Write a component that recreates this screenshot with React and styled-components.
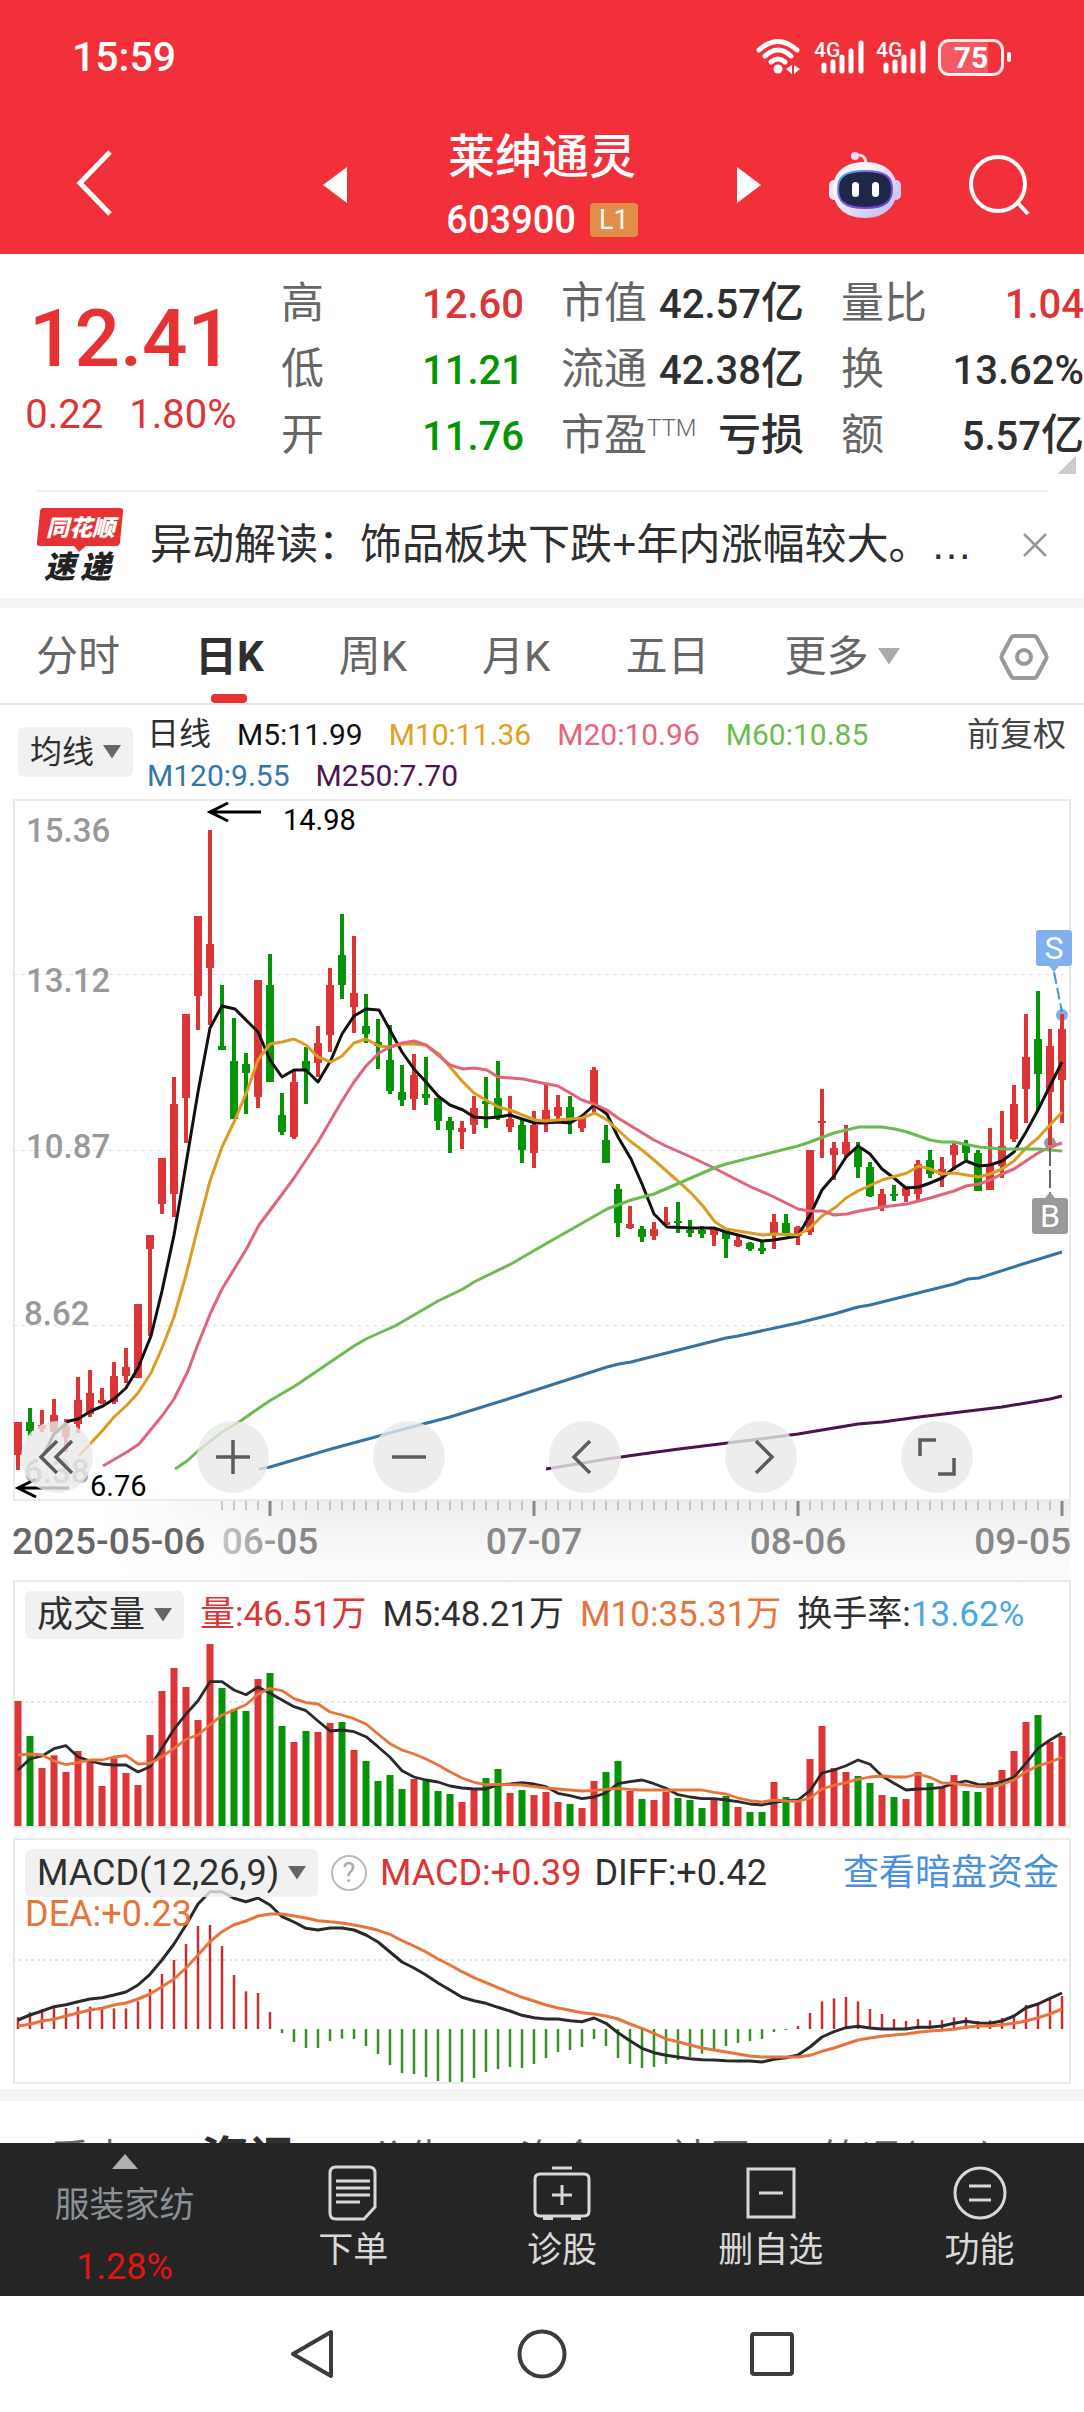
import React, { useState } from "react";
import styled, { createGlobalStyle } from "styled-components";

const UI = `Roboto, "Noto Sans CJK SC", sans-serif`;

const C = {
  brand: "#f13039",
  up: "#dd3535",
  down: "#059405",
  ink: "#2f2f2f",
  grey: "#666",
  line: "#ebebeb",
  strip: "#f4f4f4",
  orange: "#e8743b",
};

const GlobalStyle = createGlobalStyle`
  *, *::before, *::after { box-sizing: border-box; }
  body { margin: 0; background: #fff; color: ${C.ink}; font-family: ${UI}; }
  button, select { font: inherit; color: inherit; background: none; border: 0; padding: 0; margin: 0; }
  button { cursor: pointer; display: inline-flex; align-items: center; justify-content: center; }
  svg { display: block; flex: none; overflow: visible; }
  h1, p, ul, dl, dd { margin: 0; padding: 0; font-weight: 400; }
`;

/* ---------- market data, in chart units ---------- */

const FIRST_X = 18;
const STEP = 12;
const barX = (i) => FIRST_X + STEP * i;

// direction, high, body top, body bottom, low
const CANDLES = [
  "R 1422 1422 1455 1470", "G 1408 1422 1431 1436", "R 1410 1425 1429 1432", "R 1399 1415 1432 1432",
  "R 1419 1426 1437 1452", "R 1377 1400 1424 1433", "R 1370 1393 1414 1417", "R 1388 1400 1403 1404",
  "R 1362 1376 1402 1404", "R 1348 1367 1376 1383", "R 1304 1304 1378 1378", "R 1235 1235 1249 1336",
  "R 1158 1158 1204 1214", "R 1077 1104 1194 1217", "R 1014 1014 1098 1143", "R 916 916 996 1030",
  "R 830 944 968 1025", "G 985 1046 1050 1050", "G 1018 1061 1119 1119", "G 1053 1064 1073 1114",
  "R 980 980 1097 1108", "G 954 985 1082 1082", "G 1093 1115 1132 1135", "R 1071 1082 1137 1139",
  "G 1047 1061 1071 1104", "R 1026 1043 1063 1077", "R 968 985 1035 1052", "G 914 955 985 999",
  "R 936 993 1007 1033", "G 994 1026 1034 1043", "G 1019 1042 1046 1069", "G 1025 1060 1091 1094",
  "G 1065 1092 1100 1106", "R 1054 1075 1099 1110", "G 1057 1094 1098 1105", "G 1098 1098 1121 1130",
  "G 1117 1121 1130 1153", "R 1121 1128 1132 1149", "R 1096 1108 1125 1134", "G 1077 1101 1104 1128",
  "G 1061 1098 1117 1120", "R 1096 1119 1127 1132", "G 1119 1125 1150 1163", "R 1111 1125 1153 1168",
  "R 1085 1110 1121 1132", "R 1095 1107 1116 1121", "G 1096 1107 1122 1134", "R 1117 1117 1128 1132",
  "R 1067 1070 1104 1113", "G 1125 1140 1163 1163", "G 1184 1189 1223 1237", "R 1206 1224 1228 1229",
  "G 1226 1229 1237 1242", "R 1222 1229 1236 1240", "R 1207 1222 1225 1225", "G 1202 1221 1223 1233",
  "G 1220 1230 1233 1237", "G 1226 1230 1234 1238", "R 1229 1229 1235 1246", "G 1230 1230 1239 1258",
  "R 1236 1240 1246 1247", "G 1242 1243 1249 1251", "G 1240 1248 1251 1254", "R 1214 1222 1235 1249",
  "G 1214 1223 1233 1233", "R 1226 1227 1236 1245", "R 1150 1150 1232 1235", "R 1089 1121 1123 1158",
  "R 1142 1148 1155 1180", "R 1125 1142 1154 1158", "G 1142 1148 1167 1178", "G 1162 1167 1196 1197",
  "R 1189 1194 1206 1211", "G 1185 1194 1196 1201", "R 1186 1188 1196 1202", "R 1160 1164 1194 1200",
  "G 1150 1160 1174 1178", "R 1157 1169 1175 1187", "R 1143 1145 1155 1170", "G 1140 1145 1153 1161",
  "G 1150 1153 1191 1191", "R 1128 1165 1190 1190", "R 1111 1146 1166 1178", "R 1085 1104 1139 1142",
  "R 1014 1057 1089 1123", "G 991 1039 1074 1110", "R 1029 1046 1092 1145", "R 1014 1029 1080 1123",
].map((row) => {
  const [dir, high, top, bottom, low] = row.split(" ");
  return { up: dir === "R", high: +high, top: +top, bottom: +bottom, low: +low };
});

const AVERAGES = [
  { color: "#111", pts: "45,1452 54,1434 69,1421 78,1419 91,1411 103,1406 114,1399 126,1388 138,1368 151,1336 162,1291 174,1235 180,1200 187,1158 198,1092 210,1028 222,1006 235,1009 258,1032 270,1060 282,1077 294,1070 306,1070 318,1082 331,1060 342,1034 354,1016 366,1009 379,1010 390,1030 402,1052 414,1069 426,1082 438,1096 450,1105 463,1110 474,1117 487,1118 498,1117 510,1115 522,1119 535,1123 545,1123 558,1122 570,1123 582,1116 594,1105 607,1114 618,1137 631,1159 642,1184 654,1214 667,1227 691,1228 714,1228 726,1232 738,1235 762,1241 774,1240 798,1236 810,1215 822,1190 834,1176 846,1157 858,1146 870,1154 882,1169 894,1178 906,1188 919,1187 930,1183 942,1178 954,1168 966,1161 979,1166 990,1165 1002,1161 1014,1152 1026,1132 1038,1110 1050,1086 1062,1062" },
  { color: "#dc9c22", pts: "79,1456 91,1443 103,1430 114,1417 127,1405 138,1393 151,1373 162,1348 174,1317 186,1275 198,1227 210,1181 222,1147 235,1120 247,1091 258,1060 270,1044 282,1042 294,1039 306,1045 318,1057 331,1062 342,1056 354,1043 366,1039 379,1046 390,1047 402,1044 414,1044 426,1045 439,1054 450,1067 462,1081 474,1093 498,1107 510,1110 535,1120 545,1121 570,1119 582,1118 595,1113 607,1120 630,1141 642,1150 654,1160 679,1182 691,1193 703,1206 715,1222 726,1229 750,1233 763,1235 774,1234 798,1235 810,1228 822,1216 836,1207 846,1198 858,1191 882,1180 907,1173 919,1166 930,1169 942,1174 954,1173 979,1177 990,1174 1002,1169 1014,1161 1026,1148 1038,1138 1050,1125 1062,1112" },
  { color: "#e2637a", pts: "103,1466 127,1452 139,1444 162,1416 174,1399 188,1371 198,1344 211,1312 222,1289 247,1248 259,1225 271,1209 283,1193 294,1178 318,1142 342,1101 354,1082 366,1066 379,1053 390,1047 402,1043 414,1041 426,1045 438,1055 450,1065 463,1069 474,1068 487,1070 498,1077 523,1079 542,1083 558,1086 582,1100 594,1104 607,1110 618,1118 654,1140 666,1146 691,1157 714,1168 749,1186 774,1197 798,1209 810,1211 823,1211 834,1215 847,1214 859,1211 882,1207 907,1204 930,1198 954,1191 966,1186 979,1184 990,1180 1002,1174 1014,1169 1026,1161 1038,1153 1050,1147 1062,1143" },
  { color: "#6dba50", pts: "175,1469 187,1461 198,1451 222,1432 239,1422 259,1408 271,1400 295,1386 354,1346 366,1339 379,1333 395,1326 438,1301 463,1289 474,1282 511,1264 542,1246 607,1209 631,1200 654,1194 714,1168 726,1164 798,1146 810,1142 823,1137 834,1133 859,1127 882,1127 895,1129 907,1132 930,1140 942,1142 954,1142 979,1147 1002,1149 1038,1149 1062,1151" },
  { color: "#3474a4", pts: "259,1469 270,1467 304,1457 331,1449 379,1436 408,1428 450,1417 511,1398 542,1388 607,1367 619,1364 631,1362 726,1338 738,1336 798,1323 834,1314 858,1307 870,1305 954,1284 968,1279 979,1278 1026,1263 1062,1252" },
  { color: "#4a154b", pts: "546,1469 583,1463 607,1459 642,1454 679,1449 760,1439 798,1434 858,1424 882,1422 919,1417 1002,1407 1050,1399 1062,1396" },
];

const nums = (s) => s.trim().split(/\s+/).map(Number);

const VOLUME = nums(`393 498 594 556 606 543 567 648 565 609 645 495 363 294 351 450 222 354 418 423 327 309
 468 516 483 486 459 456 540 573 633 615 657 627 627 663 672 696 654 624 597 669 660 675 666 696 702 714 633 606
 573 663 687 690 665 684 690 714 690 678 711 726 726 636 681 690 567 468 594 606 618 639 675 681 687 606 639 654
 615 663 666 636 600 543 456 435 516 498`);
const VOLUME_M5 = nums(`600 567 558 536 527 560 573 582 585 585 606 590 535 478 432 392 335 335 360 374 351 370
 390 410 422 453 483 480 485 500 530 562 602 621 630 636 648 654 657 657 645 642 638 642 650 670 677 686 681 668
 641 635 630 641 655 674 681 686 686 690 695 702 705 698 692 690 662 609 600 587 570 583 618 640 660 657 656 652
 640 633 643 644 635 622 580 535 510 489`);
const VOLUME_M10 = nums(`555 552 555 573 584 578 570 570 561 557 582 580 560 535 508 495 465 435 420 404 373 355
 362 386 398 402 426 435 446 462 492 521 540 552 567 585 605 624 637 644 643 644 645 650 654 657 660 663 661 658
 655 658 660 660 660 660 660 660 667 672 684 692 696 690 693 694 684 657 646 638 628 621 618 621 621 612 622 639
 640 645 650 650 643 630 605 587 577 562`);
const MACD = nums(`562 547 538 530 534 530 530 532 535 535 514 477 432 390 342 288 285 348 435 484 489 546
 609 636 654 654 633 626 627 648 672 705 729 732 741 753 756 756 744 726 717 711 714 702 684 666 660 651 627 648
 684 702 714 711 702 690 681 671 660 648 639 633 627 606 600 588 549 514 505 501 514 537 552 567 573 567 571 570
 562 562 573 571 564 557 525 520 505 498`);
const DIFF = nums(`570 555 543 530 524 515 507 503 495 486 465 433 390 342 285 222 185 185 205 215 204 225
 260 276 295 300 294 294 300 315 336 366 396 414 435 459 480 502 512 520 532 543 556 563 567 567 572 575 564 580
 608 632 655 668 676 681 686 689 690 692 693 693 696 688 683 675 651 621 605 593 589 594 597 597 597 592 592 588
 580 574 579 580 573 558 533 522 505 489`);
const DEA = nums(`588 583 573 568 558 549 540 535 525 519 507 492 470 447 414 375 335 305 284 273 258 252
 252 258 264 272 275 279 285 292 301 313 332 348 366 387 405 425 443 458 473 488 502 513 525 534 541 548 552 558
 567 582 595 610 627 635 645 654 660 666 672 678 681 681 681 681 676 664 654 642 630 624 619 615 612 607 603 601
 598 592 588 588 584 580 573 563 552 537`);

const series = (values) => values.map((v, i) => `${barX(i)},${(v / 3).toFixed(1)}`).join(" ");

/* ---------- header ---------- */

const Page = styled.div`
  width: 100%;
  overflow: hidden;
`;

const Header = styled.header`
  background: ${C.brand};
  color: #fff;
`;

const StatusBar = styled.div`
  display: flex;
  align-items: center;
  justify-content: space-between;
  padding: 32px 80px 0 72px;
  height: 82px;
  font-size: 41px;
  font-weight: 500;
  line-height: 50px;
`;

const StatusIcons = styled.div`
  display: flex;
  align-items: center;
  gap: 12px;
`;

const TitleBar = styled.div`
  display: grid;
  grid-template-columns: 1fr 438px 1fr;
  align-items: center;
  height: 172px;
  padding: 38px 54px 8px;
`;

const BackSlot = styled.div`
  padding-left: 22px;
`;

const StockSwitch = styled.div`
  display: flex;
  align-items: center;
  justify-content: space-between;
`;

const StockTitle = styled.div`
  display: flex;
  flex-direction: column;
  align-items: center;
  padding-top: 4px;
`;

const StockName = styled.h1`
  font-size: 47px;
  line-height: 66px;
  font-weight: 500;
`;

const StockCode = styled.div`
  display: flex;
  align-items: center;
  gap: 14px;
  font: 500 38px/60px ${UI};
`;

const Level = styled.span`
  background: #e28d48;
  border-radius: 4px;
  padding: 0 9px;
  font-size: 27px;
  line-height: 34px;
  font-weight: 400;
`;

const HeaderTools = styled.div`
  display: flex;
  align-items: center;
  justify-content: flex-end;
  gap: 68px;
`;

const Wifi = () => (
  <svg width="46" height="36" viewBox="0 0 46 36" fill="none" stroke="#fff" strokeWidth="5" strokeLinecap="round">
    <path d="M3 11Q22-6 41 11" />
    <path d="M9 17Q22 5 35 17" />
    <path d="M15 23Q22 17 29 23" />
    <circle cx="22" cy="30" r="4.500" fill="#fff" stroke="none" />
    <path d="M36 26v9l-6-5zM38 35v-9l6 4z" fill="#fff" stroke="none" />
  </svg>
);

const Signal = () => (
  <svg width="50" height="36" viewBox="0 0 50 36">
    <text x="0" y="18" fontSize="21" fontWeight="500" fontFamily="Roboto" fill="#fff">4G</text>
    <g stroke="#fff" strokeWidth="5" strokeLinecap="round">
      <path d="M10 26v6M19 23v9M28 18v14M37 12v20M47 4v28" />
    </g>
  </svg>
);

const Battery = styled.span`
  display: flex;
  align-items: center;
  justify-content: center;
  position: relative;
  width: 66px;
  height: 37px;
  border: 3px solid rgba(255, 255, 255, 0.9);
  border-radius: 11px;
  font-size: 30px;
  line-height: 31px;
  font-weight: 700;
  background: linear-gradient(90deg, rgba(255, 255, 255, 0.2) 78%, transparent 78%);
  &::after {
    content: "";
    position: absolute;
    right: -10px;
    width: 4px;
    height: 10px;
    border-radius: 2px;
    background: #fff;
  }
`;

const Robot = () => (
  <svg width="72" height="68" viewBox="0 0 72 68">
    <defs>
      <linearGradient id="shell" x1="0" y1="0" x2="1" y2="1">
        <stop offset="0.3" stopColor="#fdf5fb" />
        <stop offset="1" stopColor="#b9b5ee" />
      </linearGradient>
      <linearGradient id="rim" x1="0" y1="0" x2="1" y2="1">
        <stop offset="0" stopColor="#48b7df" />
        <stop offset="0.5" stopColor="#8d4bd8" />
        <stop offset="1" stopColor="#5a43c8" />
      </linearGradient>
    </defs>
    <path d="M27 4q10-1 10 9" fill="none" stroke="#f3dff0" strokeWidth="3" />
    <circle cx="26" cy="5" r="4" fill="#ecd9f2" />
    <rect x="0" y="29" width="10" height="20" rx="5" fill="#ece6fa" />
    <rect x="62" y="29" width="10" height="20" rx="5" fill="#cfc9f3" />
    <path d="M36 11C56 11 68 22 68 38S57 67 36 67 4 55 4 38 16 11 36 11Z" fill="url(#shell)" />
    <path d="M36 20c22 0 27 7 27 18s-5 19-27 19S9 49 9 38s5-18 27-18Z" fill="#1e2748" stroke="url(#rim)" strokeWidth="2" />
    <rect x="23" y="31" width="7" height="15" rx="3.500" fill="#fff" />
    <rect x="43" y="31" width="7" height="15" rx="3.500" fill="#fff" />
  </svg>
);

/* ---------- quote ---------- */

const Quote = styled.section`
  position: relative;
  display: grid;
  grid-template-columns: 244px repeat(3, 1fr);
  column-gap: 37px;
  padding: 16px 0 22px;
`;

const LastPrice = styled.div`
  display: flex;
  flex-direction: column;
  align-items: center;
  padding: 16px 0 0 18px;
  color: ${C.up};
  white-space: nowrap;
`;

const Price = styled.strong`
  font: 500 80px/106px ${UI};
  color: #e63232;
`;

const Change = styled.span`
  display: flex;
  gap: 26px;
  font: 400 40px/46px ${UI};
`;

const Stats = styled.dl`
  display: flex;
  flex-direction: column;
`;

const Stat = styled.div`
  display: flex;
  align-items: baseline;
  justify-content: space-between;
  height: 66px;
  font: 400 43px/66px ${UI};
  white-space: nowrap;
  dt { color: ${C.grey}; }
  dd { color: ${(p) => p.$color || C.ink}; font-weight: 500; }
  sup { font: 300 24px/24px ${UI}; vertical-align: 14px; }
`;

const Figure = styled.span`
  font-size: 40px;
  line-height: 40px;
`;

const Corner = styled.span`
  position: absolute;
  right: 8px;
  bottom: 16px;
  width: 18px;
  height: 18px;
  background: linear-gradient(135deg, transparent 50%, #ccc 50%);
`;

const News = styled.section`
  display: flex;
  align-items: center;
  margin: 0 36px;
  height: 108px;
  border-top: 2px solid #eee;
`;

const NewsLink = styled.a`
  flex: 1;
  min-width: 0;
  margin: 0 20px 0 24px;
  font: 400 42px/60px "Liberation Sans", "Noto Sans CJK SC", sans-serif;
  color: ${C.ink};
  text-decoration: none;
  white-space: nowrap;
`;

const Strip = styled.div`
  height: ${(p) => p.$h}px;
  background: ${C.strip};
`;

const ExpressLogo = () => (
  <svg width="90" height="76" viewBox="0 0 90 76" role="img" aria-label="同花顺速递">
    <path d="M7 1H84q4 0 3 4L84 35q0 4-4 4H50l-7 6-5-6H4q-4 0-3-4L4 5q0-4 3-4Z" fill="#e63232" />
    <text x="10" y="29" fontSize="23" fontWeight="900" fontStyle="italic" fontFamily="Noto Sans CJK SC" fill="#fff">同花顺</text>
    <text x="8" y="71" fontSize="31" fontWeight="900" fontStyle="italic" fontFamily="Noto Sans CJK SC" fill="#222">速</text>
    <text x="44" y="71" fontSize="31" fontWeight="900" fontStyle="italic" fontFamily="Noto Sans CJK SC" fill="#222">递</text>
  </svg>
);

/* ---------- tabs ---------- */

const Tabs = styled.nav`
  display: flex;
  align-items: stretch;
  gap: 75px;
  height: 97px;
  padding: 2px 36px 0;
  border-bottom: 2px solid #e6e6e6;
`;

const Tab = styled.button`
  position: relative;
  font-size: 42px;
  line-height: 60px;
  font-weight: ${(p) => (p.$on ? 700 : 400)};
  color: ${(p) => (p.$on ? C.ink : C.grey)};
  gap: 10px;
  white-space: nowrap;
  &::after {
    content: "";
    display: ${(p) => (p.$on ? "block" : "none")};
    position: absolute;
    bottom: 0;
    left: 50%;
    margin-left: -18px;
    width: 36px;
    height: 9px;
    border-radius: 4px;
    background: #e63232;
  }
`;

const TabIcon = styled.button`
  margin-left: auto;
`;

const Caret = ({ size = 18, color = "#666" }) => (
  <svg width={size} height={size * 0.75} viewBox="0 0 18 14" preserveAspectRatio="none" aria-hidden="true">
    <path d="M0 0H18L9 14Z" fill={color} />
  </svg>
);

/* ---------- chart chrome ---------- */

const PickerBox = styled.label`
  display: inline-flex;
  align-items: center;
  flex: none;
  height: ${(p) => p.$h || 48}px;
  padding: 0 12px;
  gap: 8px;
  border-radius: 6px;
  background: rgba(238, 238, 238, 0.8);
  select {
    appearance: none;
    font-size: ${(p) => p.$size || 36}px;
    line-height: 48px;
  }
`;

const Picker = ({ name, options, ...box }) => (
  <PickerBox {...box}>
    <select aria-label={name} defaultValue={options[0]}>
      {options.map((o) => (
        <option key={o}>{o}</option>
      ))}
    </select>
    <Caret />
  </PickerBox>
);

const AverageBar = styled.div`
  display: flex;
  align-items: flex-start;
  padding: 9px 18px 3px;
  height: 94px;
`;

const AverageList = styled.div`
  flex: 1;
  display: flex;
  flex-wrap: wrap;
  column-gap: 26px;
  margin-left: 14px;
  font-size: 32px;
  line-height: 41px;
`;

const PickerSlot = styled.div`
  padding-top: 13px;
`;

const Adjust = styled.button`
  font-size: 33px;
  line-height: 41px;
  color: #444;
`;

const Value = styled.span`
  color: ${(p) => p.$color || C.ink};
  font-size: ${(p) => p.$size || 35}px;
  white-space: nowrap;
`;

const Panel = styled.section`
  display: grid;
  margin: 0 13px;
  border: 2px solid ${C.line};
  > * { grid-area: 1 / 1; }
  > svg { width: 100%; height: auto; }
`;

const Gap = styled.div`
  height: ${(p) => p.$h}px;
`;

const Controls = styled.div`
  align-self: end;
  display: flex;
  gap: 104px;
  padding: 0 0 6px 6px;
`;

const RoundButton = styled.button`
  width: 72px;
  height: 72px;
  border-radius: 50%;
  background: rgba(232, 232, 232, 0.8);
`;

const Legend = styled.div`
  align-self: start;
  display: flex;
  flex-wrap: wrap;
  align-items: center;
  column-gap: ${(p) => p.$gap}px;
  padding: 9px 10px 0;
  line-height: 48px;
  font-size: 35px;
`;

const LegendBreak = styled.div`
  flex-basis: 100%;
  line-height: 34px;
`;

const DarkPoolLink = styled.a`
  margin-left: auto;
  font-size: 36px;
  color: #4a90dc;
  text-decoration: none;
`;

const HelpButton = styled.button`
  width: 36px;
  height: 36px;
  border: 2px solid #bbb;
  border-radius: 50%;
  color: #aaa;
  font-size: 27px;
  line-height: 30px;
`;

const Axis = styled.div`
  margin: 0 13px;
  height: 79px;
  background:
    linear-gradient(90deg, #fff 8%, rgba(255, 255, 255, 0) 30%),
    linear-gradient(180deg, #ededed, #fafafa 70%, #fbfbfb);
  svg { width: 100%; height: auto; }
`;

const TabClip = styled.nav`
  display: flex;
  align-items: flex-start;
  gap: 71px;
  height: 42px;
  padding: 28px 0 0 50px;
  overflow: hidden;
  button { flex: none; font-size: 40px; line-height: 62px; color: ${C.grey}; white-space: nowrap; }
  button:nth-child(2) { font-size: 48px; font-weight: 700; color: ${C.ink}; }
`;

/* ---------- bottom ---------- */

const ActionBar = styled.nav`
  display: flex;
  height: 153px;
  background: #252525;
  color: #d8d8d8;
`;

const Sector = styled.button`
  flex: 0 0 249px;
  flex-direction: column;
  justify-content: flex-start;
  padding: 11px 0 0;
  font-size: 35px;
  line-height: 52px;
  color: #8a9094;
`;

const SectorName = styled.span`
  padding: 11px 0 10px;
`;

const SectorChange = styled.span`
  color: #e01414;
  font-size: 36px;
  line-height: 50px;
`;

const Action = styled.button`
  flex: 1;
  flex-direction: column;
  justify-content: flex-start;
  padding-top: 22px;
  gap: 6px;
  font-size: 35px;
  line-height: 48px;
`;

const SystemNav = styled.nav`
  display: flex;
  justify-content: center;
  align-items: center;
  gap: 182px;
  height: 116px;
`;

const ICONS = {
  order: (
    <>
      <path d="M8 2H41q6 0 6 6V42L36 54H8q-6 0-6-6V8q0-6 6-6Z" />
      <path d="M8 16H42M8 23H42M8 30H42M8 37H32" />
    </>
  ),
  clinic: (
    <>
      <path d="M19 3H39M7 9H51q5 0 5 5V46q0 5-5 5H7q-5 0-5-5V14q0-5 5-5ZM29 20V40M19 30H39" />
      <path d="M10 53H20M38 53H48" strokeWidth="4" />
    </>
  ),
  remove: <path d="M2 4H48V52H2ZM13 28H37" />,
  more: (
    <>
      <circle cx="26" cy="28" r="25" />
      <path d="M15 21H37M15 35H37" />
    </>
  ),
};

const ACTIONS = [
  ["order", 50, "下单"],
  ["clinic", 58, "诊股"],
  ["remove", 50, "删自选"],
  ["more", 52, "功能"],
];

const KLine = () => (
  <svg viewBox="15 801 1054 698" role="img" aria-label="日K线图" fontFamily={UI}>
    <g stroke="#dedede" strokeDasharray="4 4">
      <path d="M13 974.500H1071M13 1150.500H1071M13 1325.500H1071" />
    </g>
    <g fill="#999" fontSize="33" fontWeight="500">
      <text x="26" y="842">15.36</text>
      <text x="26" y="992">13.12</text>
      <text x="26" y="1158">10.87</text>
      <text x="24" y="1325">8.62</text>
      <text x="24" y="1483">6.38</text>
    </g>
    <circle cx="1062" cy="1015" r="6" fill="#86aee8" />
    <circle cx="1050" cy="1143" r="6" fill="#999" />
    {CANDLES.map((c, i) => (
      <g key={i} fill={c.up ? "#dd3535" : "#059405"}>
        <rect x={barX(i) - 2} y={c.high} width="4" height={Math.max(1, c.low - c.high)} />
        <rect x={barX(i) - 4} y={c.top} width="8" height={c.bottom - c.top} />
      </g>
    ))}
    {AVERAGES.map((a) => (
      <polyline key={a.color} points={a.pts} fill="none" stroke={a.color} strokeWidth="3" strokeLinejoin="round" />
    ))}
    <path d="M261 812H210M228 803L210 812L228 821M69 1488H18M36 1479L18 1488L36 1497" fill="none" stroke="#000" strokeWidth="3" />
    <g fontSize="29">
      <text x="283" y="830">14.98</text>
      <text x="90" y="1496">6.76</text>
    </g>
    <path d="M1054 972L1062 1012" stroke="#4e8fda" strokeWidth="2" strokeDasharray="12 4" />
    <path d="M1050 1148V1195" stroke="#666" strokeWidth="2" strokeDasharray="18 4" />
    <path d="M1039 930h30q3 0 3 3v30q0 3-3 3h-10l-5 6-5-6h-10q-3 0-3-3v-30q0-3 3-3Z" fill="#7fb1f0" />
    <path d="M1035 1198h10l5-6 5 6h10q3 0 3 3v30q0 3-3 3h-30q-3 0-3-3v-30q0-3 3-3Z" fill="#999" />
    <g fill="#fff" fontSize="32" textAnchor="middle">
      <text x="1054" y="959">S</text>
      <text x="1050" y="1227">B</text>
    </g>
  </svg>
);

const DateAxis = () => (
  <svg viewBox="13 1501 1058 79" aria-hidden="true" fontFamily={UI}>
    <defs>
      <linearGradient id="fade" gradientUnits="userSpaceOnUse" x1="210" x2="290" y1="0" y2="0">
        <stop offset="0" stopColor="#d0d0d0" />
        <stop offset="1" stopColor="#888" />
      </linearGradient>
    </defs>
    {CANDLES.map((_, i) => {
      if (i < 17) return null;
      const major = (i - 21) % 22 === 0;
      return (
        <rect
          key={i}
          x={barX(i) - (major ? 1.5 : 0.5)}
          y="1501"
          width={major ? 3 : 1}
          height={major ? 15 : 9}
          fill={major ? "#888" : "#999"}
        />
      );
    })}
    <g fontSize="37" fontWeight="500">
      <text x="12" y="1554" fill="#666">2025-05-06</text>
      <g fill="#888" textAnchor="middle">
        <text x="270" y="1554" fill="url(#fade)">06-05</text>
        <text x="534" y="1554">07-07</text>
        <text x="798" y="1554">08-06</text>
        <text x="1071" y="1554" textAnchor="end">09-05</text>
      </g>
    </g>
  </svg>
);

const VolumeChart = () => (
  <svg viewBox="15 12 1054 244" role="img" aria-label="成交量图">
    <path d="M13 132H1071" stroke="#e6e6e6" strokeDasharray="3 3" strokeWidth="2" />
    {VOLUME.map((v, i) => (
      <rect key={i} x={barX(i) - 3.5} y={v / 3} width="7" height={256 - v / 3} fill={CANDLES[i].up ? "#dd3535" : "#059405"} />
    ))}
    <g fill="none" strokeWidth="2.800" strokeLinejoin="round">
      <polyline points={series(VOLUME_M5)} stroke="#2a2a2a" />
      <polyline points={series(VOLUME_M10)} stroke={C.orange} />
    </g>
  </svg>
);

const MacdChart = () => (
  <svg viewBox="15 10 1054 242" role="img" aria-label="MACD图">
    <path d="M13 130H1071" stroke="#e6e6e6" strokeDasharray="3 3" strokeWidth="2" />
    {MACD.map((v, i) => (
      <path key={i} d={`M${barX(i)} 199V${v / 3}`} stroke={v < 597 ? "#c03030" : "#3d8f2a"} strokeWidth="2.500" />
    ))}
    <g fill="none" strokeWidth="3" strokeLinejoin="round">
      <polyline points={series(DIFF)} stroke="#2a2a2a" />
      <polyline points={series(DEA)} stroke={C.orange} />
    </g>
  </svg>
);

const CONTROLS = [
  ["最早", "M36 20L20 36L36 52M51 20L35 36L51 52"],
  ["放大", "M36 19V53M19 36H53"],
  ["缩小", "M19 36H53"],
  ["向左", "M41 20L25 36L41 52"],
  ["向右", "M31 20L47 36L31 52"],
  ["全屏", "M19 35V19H35M53 37V53H37"],
];

const TABS = ["分时", "日K", "周K", "月K", "五日"];

export default function App() {
  const [tab, setTab] = useState("日K");
  return (
    <Page>
      <GlobalStyle />
      <Header>
        <StatusBar>
          <span>15:59</span>
          <StatusIcons>
            <Wifi />
            <Signal />
            <Signal />
            <Battery>75</Battery>
          </StatusIcons>
        </StatusBar>
        <TitleBar>
          <BackSlot>
            <button aria-label="返回">
              <svg width="36" height="66" viewBox="0 0 36 66" fill="none" stroke="#fff" strokeWidth="5">
                <path d="M34 2L4 33L34 64" />
              </svg>
            </button>
          </BackSlot>
          <StockSwitch>
            <button aria-label="上一只">
              <svg width="24" height="36" viewBox="0 0 24 36"><path d="M24 0V36L0 18Z" fill="#fff" /></svg>
            </button>
            <StockTitle>
              <StockName>莱绅通灵</StockName>
              <StockCode>
                603900<Level>L1</Level>
              </StockCode>
            </StockTitle>
            <button aria-label="下一只">
              <svg width="24" height="36" viewBox="0 0 24 36"><path d="M0 0V36L24 18Z" fill="#fff" /></svg>
            </button>
          </StockSwitch>
          <HeaderTools>
            <button aria-label="智能助手"><Robot /></button>
            <button aria-label="搜索">
              <svg width="61" height="61" viewBox="0 0 61 61" fill="none" stroke="#fff" strokeWidth="4">
                <circle cx="29" cy="29" r="27" />
                <path d="M48 47L59 59" />
              </svg>
            </button>
          </HeaderTools>
        </TitleBar>
      </Header>

      <Quote>
        <LastPrice>
          <Price>12.41</Price>
          <Change><span>0.22</span><span>1.80%</span></Change>
        </LastPrice>
        <Stats>
          <Stat $color={C.up}><dt>高</dt><dd><Figure>12.60</Figure></dd></Stat>
          <Stat $color={C.down}><dt>低</dt><dd><Figure>11.21</Figure></dd></Stat>
          <Stat $color={C.down}><dt>开</dt><dd><Figure>11.76</Figure></dd></Stat>
        </Stats>
        <Stats>
          <Stat><dt>市值</dt><dd><Figure>42.57</Figure>亿</dd></Stat>
          <Stat><dt>流通</dt><dd><Figure>42.38</Figure>亿</dd></Stat>
          <Stat><dt>市盈<sup>TTM</sup></dt><dd>亏损</dd></Stat>
        </Stats>
        <Stats>
          <Stat $color={C.up}><dt>量比</dt><dd><Figure>1.04</Figure></dd></Stat>
          <Stat><dt>换</dt><dd><Figure>13.62%</Figure></dd></Stat>
          <Stat><dt>额</dt><dd><Figure>5.57</Figure>亿</dd></Stat>
        </Stats>
        <Corner />
      </Quote>

      <News>
        <ExpressLogo />
        <NewsLink href="#news">异动解读：饰品板块下跌+年内涨幅较大。…</NewsLink>
        <button aria-label="关闭">
          <svg width="26" height="26" viewBox="0 0 26 26" stroke="#999" strokeWidth="2.500"><path d="M2 2L24 24M24 2L2 24" /></svg>
        </button>
      </News>
      <Strip $h={10} />

      <Tabs>
        {TABS.map((t) => (
          <Tab key={t} $on={t === tab} onClick={() => setTab(t)}>{t}</Tab>
        ))}
        <Tab aria-haspopup="menu">更多<Caret size={22} color="#aaa" /></Tab>
        <TabIcon aria-label="图表设置">
          <svg width="48" height="46" viewBox="0 0 48 46" fill="none" stroke="#999" strokeWidth="4">
            <path d="M14 2H34q2 0 3 2L46 21q1 2 0 4L37 42q-1 2-3 2H14q-2 0-3-2L2 25q-1-2 0-4L11 4q1-2 3-2Z" />
            <circle cx="24" cy="23" r="7" />
          </svg>
        </TabIcon>
      </Tabs>

      <AverageBar>
        <PickerSlot>
          <Picker name="主图指标" options={["均线"]} $h={50} $size={32} />
        </PickerSlot>
        <AverageList>
          <Value $size={32}>日线</Value>
          <Value $color="#111" $size={30}>M5:11.99</Value>
          <Value $color="#e0a020" $size={30}>M10:11.36</Value>
          <Value $color="#e8647a" $size={30}>M20:10.96</Value>
          <Value $color="#6cbc4c" $size={30}>M60:10.85</Value>
          <Value $color="#3576a6" $size={30}>M120:9.55</Value>
          <Value $color="#4c1650" $size={30}>M250:7.70</Value>
        </AverageList>
        <Adjust>前复权</Adjust>
      </AverageBar>

      <Panel>
        <KLine />
        <Controls>
          {CONTROLS.map(([label, d]) => (
            <RoundButton key={label} aria-label={label}>
              <svg width="72" height="72" viewBox="0 0 72 72" fill="none" stroke="#5c5c5c" strokeWidth="3.500"><path d={d} /></svg>
            </RoundButton>
          ))}
        </Controls>
      </Panel>
      <Axis><DateAxis /></Axis>

      <Panel>
        <VolumeChart />
        <Legend $gap={16}>
          <Picker name="副图指标一" options={["成交量"]} />
          <Value $color={C.up}>量:46.51万</Value>
          <Value>M5:48.21万</Value>
          <Value $color={C.orange}>M10:35.31万</Value>
          <Value>换手率:<Value $color="#48a7e0">13.62%</Value></Value>
        </Legend>
      </Panel>
      <Gap $h={10} />

      <Panel>
        <MacdChart />
        <Legend $gap={13}>
          <Picker name="副图指标二" options={["MACD(12,26,9)"]} />
          <HelpButton aria-label="指标说明">?</HelpButton>
          <Value $color={C.up} $size={36}>MACD:+0.39</Value>
          <Value $size={36}>DIFF:+0.42</Value>
          <DarkPoolLink href="#funds">查看暗盘资金</DarkPoolLink>
          <LegendBreak><Value $color={C.orange} $size={36}>DEA:+0.23</Value></LegendBreak>
        </Legend>
      </Panel>
      <Gap $h={5} />

      <Strip $h={12} />
      <TabClip>
        <button>看点</button>
        <button>资讯</button>
        <button>公告</button>
        <button>资金</button>
        <button>社区</button>
        <button>简况(F10)</button>
      </TabClip>

      <ActionBar>
        <Sector>
          <svg width="26" height="15" viewBox="0 0 26 15"><path d="M13 0L26 15H0Z" fill="#b0b0b0" /></svg>
          <SectorName>服装家纺</SectorName>
          <SectorChange>1.28%</SectorChange>
        </Sector>
        {ACTIONS.map(([icon, w, label]) => (
          <Action key={icon}>
            <svg width={w} height="56" viewBox={`0 0 ${w} 56`} fill="none" stroke="#d8d8d8" strokeWidth="3">{ICONS[icon]}</svg>
            {label}
          </Action>
        ))}
      </ActionBar>
      <SystemNav>
        <button aria-label="返回上级">
          <svg width="46" height="50" viewBox="0 0 46 50" fill="none" stroke="#3c3c3c" strokeWidth="4" strokeLinejoin="round"><path d="M42 3V47L4 25Z" /></svg>
        </button>
        <button aria-label="主屏幕">
          <svg width="50" height="50" viewBox="0 0 50 50" fill="none" stroke="#3c3c3c" strokeWidth="4"><circle cx="25" cy="25" r="22.500" /></svg>
        </button>
        <button aria-label="最近任务">
          <svg width="46" height="46" viewBox="0 0 46 46" fill="none" stroke="#3c3c3c" strokeWidth="4"><rect x="3" y="3" width="40" height="40" rx="2" /></svg>
        </button>
      </SystemNav>
    </Page>
  );
}
